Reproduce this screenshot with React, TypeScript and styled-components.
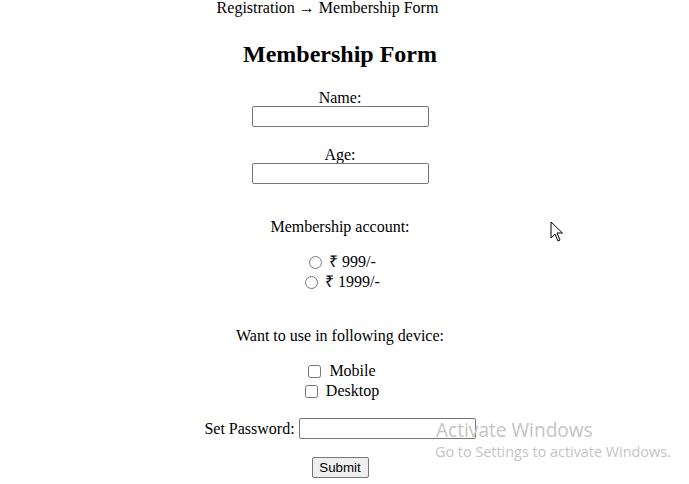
import React from 'react'
import styled, { createGlobalStyle } from 'styled-components'

const GlobalStyle = createGlobalStyle`
    html, body {
        margin: 0;
        padding: 0;
        background: #ffffff;
    }
    body {
        font-family: "Liberation Serif", "Times New Roman", serif;
        font-size: 16px;
        color: #000000;
    }
`

const Page = styled.div`
    position: relative;
    width: 680px;
    height: 484px;
    overflow: hidden;
`

const Form = styled.form`
    display: flex;
    flex-direction: column;
    align-items: center;
    line-height: 18px;
`

const Crumb = styled.div`
    margin: -1px 25px 0 0;
`

const Title = styled.h2`
    font-size: 24px;
    line-height: 28px;
    font-weight: bold;
    margin: 23px 0 0;
`

const Label = styled.label<{ $top: number }>`
    display: block;
    margin-top: ${p => p.$top}px;
`

const TextBox = styled.input<{ $top?: number }>`
    box-sizing: border-box;
    width: 177px;
    height: 21px;
    margin: ${p => p.$top ?? 0}px 0 0;
    padding: 1px 2px;
    border: 1px solid #767676;
    border-radius: 2px;
    font: 13.33px Arial, "Liberation Sans", sans-serif;
    background: #ffffff;
`

const Choice = styled.div<{ $top: number }>`
    display: flex;
    align-items: center;
    height: 20px;
    margin-top: ${p => p.$top}px;
`

const Radio = styled.input`
    width: 13px;
    height: 13px;
    margin: 0 7px 0 5px;
`

const Check = styled.input`
    width: 13px;
    height: 13px;
    margin: 0 8px 0 4px;
`

const PasswordRow = styled.div`
    display: flex;
    align-items: center;
    gap: 4px;
    margin-top: 17px;
`

const SubmitButton = styled.button`
    margin-top: 18px;
    height: 21px;
    width: 57px;
    padding: 0 6px;
    font: 13.33px Arial, "Liberation Sans", sans-serif;
    color: #000000;
    background: #efefef;
    border: 1px solid #767676;
    border-radius: 2px;
`

const Watermark = styled.div`
    position: absolute;
    left: 435px;
    top: 417px;
    font-family: "Open Sans", "Noto Sans", sans-serif;
    color: #c4c4c4;
    pointer-events: none;
`

const WatermarkTitle = styled.div`
    font-size: 19.1px;
    line-height: 26px;
    margin-left: 1px;
`

const WatermarkNote = styled.div`
    font-size: 14.4px;
    line-height: 18px;
`

const Cursor = styled.svg`
    position: absolute;
    left: 550px;
    top: 221px;
`

const App = () => {
    return (
        <Page>
            <GlobalStyle />
            <Form onSubmit={e => e.preventDefault()}>
                <Crumb>Registration → Membership Form</Crumb>
                <Title>Membership Form</Title>

                <Label $top={21} htmlFor="name">Name:</Label>
                <TextBox id="name" type="text" $top={-1} />

                <Label $top={19} htmlFor="age">Age:</Label>
                <TextBox id="age" type="text" $top={-1} />

                <Label $top={34}>Membership account:</Label>
                <Choice $top={16}>
                    <Radio type="radio" name="plan" />
                    <span>₹ 999/-</span>
                </Choice>
                <Choice $top={0}>
                    <Radio type="radio" name="plan" />
                    <span>₹ 1999/-</span>
                </Choice>

                <Label $top={35}>Want to use in following device:</Label>
                <Choice $top={16}>
                    <Check type="checkbox" />
                    <span>Mobile</span>
                </Choice>
                <Choice $top={0}>
                    <Check type="checkbox" />
                    <span>Desktop</span>
                </Choice>

                <PasswordRow>
                    <span>Set Password:</span>
                    <TextBox type="password" />
                </PasswordRow>

                <SubmitButton type="submit">Submit</SubmitButton>
            </Form>

            <Cursor width="14" height="22" viewBox="0 0 14 22">
                <path d="M1 1 L1 17 L5 13 L8 20 L10 19 L7 12 L12.5 12 Z" fill="#ffffff" stroke="#000000" strokeWidth="1" strokeLinejoin="round" />
            </Cursor>

            <Watermark>
                <WatermarkTitle>Activate Windows</WatermarkTitle>
                <WatermarkNote>Go to Settings to activate Windows.</WatermarkNote>
            </Watermark>
        </Page>
    )
}

export default App
